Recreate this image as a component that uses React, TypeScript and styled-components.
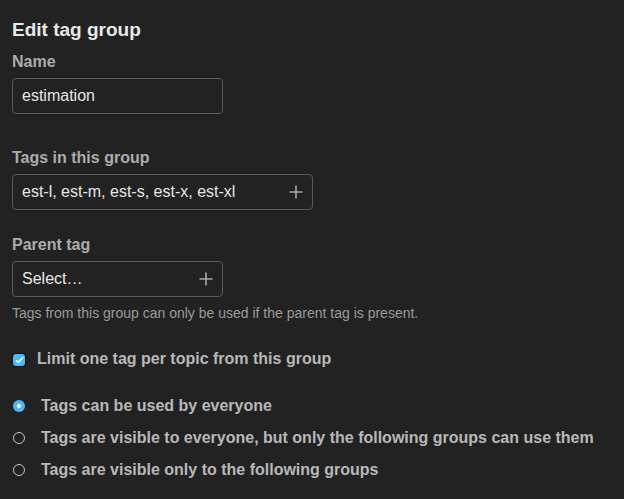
import React from "react";
import styled, { createGlobalStyle } from "styled-components";

const Global = createGlobalStyle`
  html, body { margin: 0; padding: 0; background: #222222; }
  body { font-family: "Liberation Sans", Arial, sans-serif; }
`;

const Page = styled.div`
  display: flex;
  flex-direction: column;
  padding: 18px 12px 0 12px;
  width: 624px;
  height: 499px;
  box-sizing: border-box;
  background: #222222;
`;

const Title = styled.h2`
  margin: 0;
  font-size: 19px;
  line-height: 24px;
  font-weight: 700;
  color: #e8e8e8;
`;

const Label = styled.div<{ $top: number }>`
  margin-top: ${(p) => p.$top}px;
  font-size: 16px;
  line-height: 20px;
  font-weight: 700;
  color: #acacac;
`;

const InputBox = styled.div<{ $width: number }>`
  margin-top: 6px;
  width: ${(p) => p.$width}px;
  height: 36px;
  box-sizing: border-box;
  border: 1px solid #5b5b5b;
  border-radius: 4px;
  display: flex;
  align-items: center;
  justify-content: space-between;
  padding: 0 9px 0 9px;
  font-size: 16px;
  color: #e6e6e6;
`;

const InputText = styled.span`
  white-space: nowrap;
`;

const Help = styled.div`
  margin-top: 7px;
  font-size: 14px;
  line-height: 18px;
  color: #9a9a9a;
`;

const OptionRow = styled.div<{ $top: number; $indent: number }>`
  margin-top: ${(p) => p.$top}px;
  display: flex;
  align-items: center;
  gap: ${(p) => p.$indent}px;
  height: 20px;
  padding-left: 1px;
  font-size: 16px;
  font-weight: 700;
  color: #b8b8b8;
`;

const CheckBox = styled.span`
  width: 12px;
  height: 12px;
  margin-top: 2px;
  border-radius: 3px;
  background: #4db8f4;
  box-shadow: 0 0 0 1px #111;
  display: flex;
  align-items: center;
  justify-content: center;
  flex: none;
`;

const Radio = styled.span<{ $on?: boolean }>`
  width: 12px;
  height: 12px;
  border-radius: 50%;
  box-sizing: border-box;
  flex: none;
  display: flex;
  align-items: center;
  justify-content: center;
  background: ${(p) => (p.$on ? "#4db8f4" : "transparent")};
  border: ${(p) => (p.$on ? "none" : "1.5px solid #c4c4c4")};
  &::after {
    content: "";
    display: ${(p) => (p.$on ? "block" : "none")};
    width: 4px;
    height: 4px;
    border-radius: 50%;
    background: #ffffff;
  }
`;

const Plus = () => (
  <svg width="14" height="14" viewBox="0 0 14 14">
    <path d="M7 0.5v13M0.5 7h13" stroke="#a8a8a8" strokeWidth="1.6" />
  </svg>
);

export default function App() {
  return (
    <>
      <Global />
      <Page>
        <Title>Edit tag group</Title>
        <Label $top={10}>Name</Label>
        <InputBox $width={211}>
          <InputText>estimation</InputText>
        </InputBox>
        <Label $top={34}>Tags in this group</Label>
        <InputBox $width={301}>
          <InputText>est-l, est-m, est-s, est-x, est-xl</InputText>
          <Plus />
        </InputBox>
        <Label $top={25}>Parent tag</Label>
        <InputBox $width={211}>
          <InputText>Select…</InputText>
          <Plus />
        </InputBox>
        <Help>Tags from this group can only be used if the parent tag is present.</Help>
        <OptionRow $top={27} $indent={12}>
          <CheckBox>
            <svg width="9" height="8" viewBox="0 0 9 8">
              <path d="M1 4.2l2.3 2.3L8 1.2" stroke="#fff" strokeWidth="1.5" fill="none" />
            </svg>
          </CheckBox>
          Limit one tag per topic from this group
        </OptionRow>
        <OptionRow $top={27} $indent={16}>
          <Radio $on />
          Tags can be used by everyone
        </OptionRow>
        <OptionRow $top={12} $indent={16}>
          <Radio />
          Tags are visible to everyone, but only the following groups can use them
        </OptionRow>
        <OptionRow $top={12} $indent={16}>
          <Radio />
          Tags are visible only to the following groups
        </OptionRow>
      </Page>
    </>
  );
}
